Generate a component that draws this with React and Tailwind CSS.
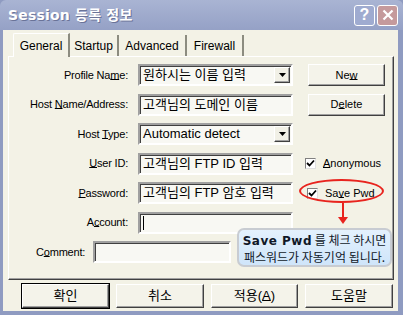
import React from "react";

const FONT = { fontFamily: '"Liberation Sans", "Noto Sans CJK KR", sans-serif' };
const KFONT = { fontFamily: '"Liberation Sans", "Noto Sans CJK KR", sans-serif' };

const U = ({ children }) => <span className="underline underline-offset-[0px]">{children}</span>;

const Field = ({ value, combo, w = "w-[155px]" }) => (
  <div
    className={`${w} h-[22px] flex items-center bg-[#f8f8f3] border-2 border-t-[#a0a0a0] border-l-[#a0a0a0] border-b-[#ffffff] border-r-[#ffffff] shadow-[inset_1px_1px_0_#404040]`}
  >
    <span className="flex-1 pl-[3px] text-[13px] leading-[16px] text-black whitespace-nowrap overflow-hidden" style={KFONT}>
      {value}
    </span>
    {combo && (
      <span className="w-[16px] h-[16px] mr-[1px] flex items-center justify-center bg-[#f1f0e6] border border-t-[#ffffff] border-l-[#ffffff] border-b-[#404040] border-r-[#404040] shadow-[inset_-1px_-1px_0_#a0a0a0]">
        <svg width="7" height="4" viewBox="0 0 7 4">
          <polygon points="0,0 7,0 3.5,4" fill="#000" />
        </svg>
      </span>
    )}
  </div>
);

const Label = ({ children }) => (
  <div className="w-[120px] text-right text-[11px] tracking-[-0.2px] text-black pr-[1px]">{children}</div>
);

const Btn = ({ children, w = "w-[77px]", def }) => (
  <div
    className={`${w} h-[22px] flex items-center justify-center text-[11px] text-black bg-[#f4f3ea] border border-t-[#ffffff] border-l-[#ffffff] border-b-[#404040] border-r-[#404040] shadow-[inset_-1px_-1px_0_#a0a0a0] ${def ? "outline outline-1 outline-black" : ""}`}
  >
    {children}
  </div>
);

const Check = ({ children }) => (
  <div className="flex items-center gap-[7px] text-[11px] text-black">
    <span className="w-[11px] h-[11px] bg-white border border-t-[#808080] border-l-[#808080] border-b-[#e0e0e0] border-r-[#e0e0e0] flex items-center justify-center">
      <svg width="9" height="9" viewBox="0 0 9 9">
        <path d="M1 4 L3.5 6.5 L8 1.5" stroke="#000" strokeWidth="1.8" fill="none" />
      </svg>
    </span>
    <span>{children}</span>
  </div>
);

const Row = ({ label, children, right }) => (
  <div className="flex items-center h-[22px]">
    <Label>{label}</Label>
    <div className="ml-[9px]">{children}</div>
    {right}
  </div>
);

export default function App() {
  return (
    <div className="w-[403px] h-[315px] bg-[#8f9bc1] flex flex-col overflow-hidden" style={FONT}>
      {/* title bar */}
      <div className="h-[30px] flex items-center bg-gradient-to-b from-[#a9b4d3] to-[#95a1c6] px-[8px] rounded-t-[6px]">
        <span
          className="flex-1 text-white font-bold text-[14px] tracking-[0.2px] [text-shadow:1px_1px_0_#6a7398]"
          style={{ fontFamily: '"DejaVu Sans", "Noto Sans CJK KR", sans-serif' }}
        >
          Session 등록 정보
        </span>
        <div className="flex gap-[2px] mr-[-3px]">
          <div className="w-[21px] h-[21px] rounded-[3px] border border-white bg-[#9fabd0] flex items-center justify-center text-white font-bold text-[16px]">
            ?
          </div>
          <div className="w-[21px] h-[21px] rounded-[3px] border border-white bg-[#c59a9c] flex items-center justify-center">
            <svg width="12" height="12" viewBox="0 0 12 12">
              <path d="M1.5 1.5 L10.5 10.5 M10.5 1.5 L1.5 10.5" stroke="#fff" strokeWidth="2.2" />
            </svg>
          </div>
        </div>
      </div>

      {/* body */}
      <div className="relative ml-[3px] mr-[5px] h-[281px] bg-[#f3f2e6] flex flex-col">
        {/* tabs */}
        <div className="h-[26px] flex items-end pl-[10px] text-[12px] text-black">
          <div className="h-[24px] w-[57px] flex items-center justify-center bg-[#f3f2e6] border-t border-l border-t-white border-l-white border-r-2 border-r-[#8c8c80] rounded-tl-[2px] -mb-[1px] relative z-10">
            General
          </div>
          <div className="h-[21px] w-[49px] flex items-center justify-center border-r-2 border-r-[#8c8c80]">Startup</div>
          <div className="h-[21px] w-[68px] flex items-center justify-center border-r-2 border-r-[#8c8c80]">Advanced</div>
          <div className="h-[21px] w-[57px] flex items-center justify-center border-r-2 border-r-[#8c8c80]">Firewall</div>
        </div>

        {/* panel */}
        <div className="ml-[5px] w-[386px] h-[224px] border-t border-l border-t-white border-l-white border-r border-b border-r-[#404040] border-b-[#404040] shadow-[inset_-1px_-1px_0_#a0a0a0] pt-[7px] flex flex-col gap-[7.5px]">
          <Row
            label={<>Profile Na<U>m</U>e:</>}
            right={<div className="ml-[15px]"><Btn>Ne<U>w</U></Btn></div>}
          >
            <Field value="원하시는 이름 입력" combo />
          </Row>
          <Row
            label={<>Host <U>N</U>ame/Address:</>}
            right={<div className="ml-[15px]"><Btn>D<U>e</U>lete</Btn></div>}
          >
            <Field value="고객님의 도메인 이름" />
          </Row>
          <Row label={<>Host <U>T</U>ype:</>}>
            <Field value="Automatic detect" combo />
          </Row>
          <Row label={<><U>U</U>ser ID:</>} right={<div className="ml-[12px]"><Check><U>A</U>nonymous</Check></div>}>
            <Field value="고객님의 FTP ID 입력" />
          </Row>
          <Row label={<><U>P</U>assword:</>} right={<div className="ml-[14px]"><Check>Sa<U>v</U>e Pwd</Check></div>}>
            <Field value="고객님의 FTP 암호 입력" />
          </Row>
          <Row label={<>A<U>c</U>count:</>}>
            <Field value={<span className="inline-block w-[1px] h-[14px] bg-black align-middle" />} />
          </Row>
          <div className="flex items-center h-[22px] pl-[27px]">
            <div className="text-[11px] tracking-[-0.2px] text-black">C<U>o</U>mment:</div>
            <div className="ml-[8px]">
              <Field value={null} w="w-[138px]" />
            </div>
          </div>
        </div>

        {/* bottom buttons */}
        <div className="mt-[4px] ml-[19px] flex gap-[7px] text-[13px]" style={KFONT}>
          <Btn w="w-[87px] h-[24px] text-[13px]" def>확인</Btn>
          <Btn w="w-[88px] h-[24px] text-[13px]">취소</Btn>
          <Btn w="w-[87px] h-[24px] text-[13px]">적용(<U>A</U>)</Btn>
          <Btn w="w-[88px] h-[24px] text-[13px]">도움말</Btn>
        </div>

        {/* red ellipse highlight */}
        <div className="absolute left-[296px] top-[149px] w-[85px] h-[24px] rounded-[50%] border-2 border-[#e8241e]" />
        {/* arrow */}
        <div className="absolute left-[339px] top-[173px] w-[2px] h-[16px] bg-[#e8241e]" />
        <svg className="absolute left-[335px] top-[187px]" width="10" height="7" viewBox="0 0 10 7">
          <polygon points="0,0 10,0 5,7" fill="#e8241e" />
        </svg>

        {/* tooltip */}
        <div
          className="absolute left-[234px] top-[198px] w-[155px] h-[39px] rounded-[7px] border-2 border-[#c8ccd2] bg-gradient-to-b from-[#e4f1fd] to-[#cfe5fa] flex flex-col items-center justify-center text-[12px] leading-[15px] text-[#101828]"
          style={{ fontFamily: '"DejaVu Sans", "Noto Sans CJK KR", sans-serif' }}
        >
          <div className="whitespace-nowrap">
            <span className="font-bold tracking-[0.5px]">Save Pwd</span>
            <span style={{ fontFamily: '"Noto Sans CJK KR", sans-serif' }}> 를 체크 하시면</span>
          </div>
          <div className="whitespace-nowrap" style={{ fontFamily: '"Noto Sans CJK KR", sans-serif' }}>
            패스워드가 자동기억 됩니다.
          </div>
        </div>
      </div>
    </div>
  );
}
